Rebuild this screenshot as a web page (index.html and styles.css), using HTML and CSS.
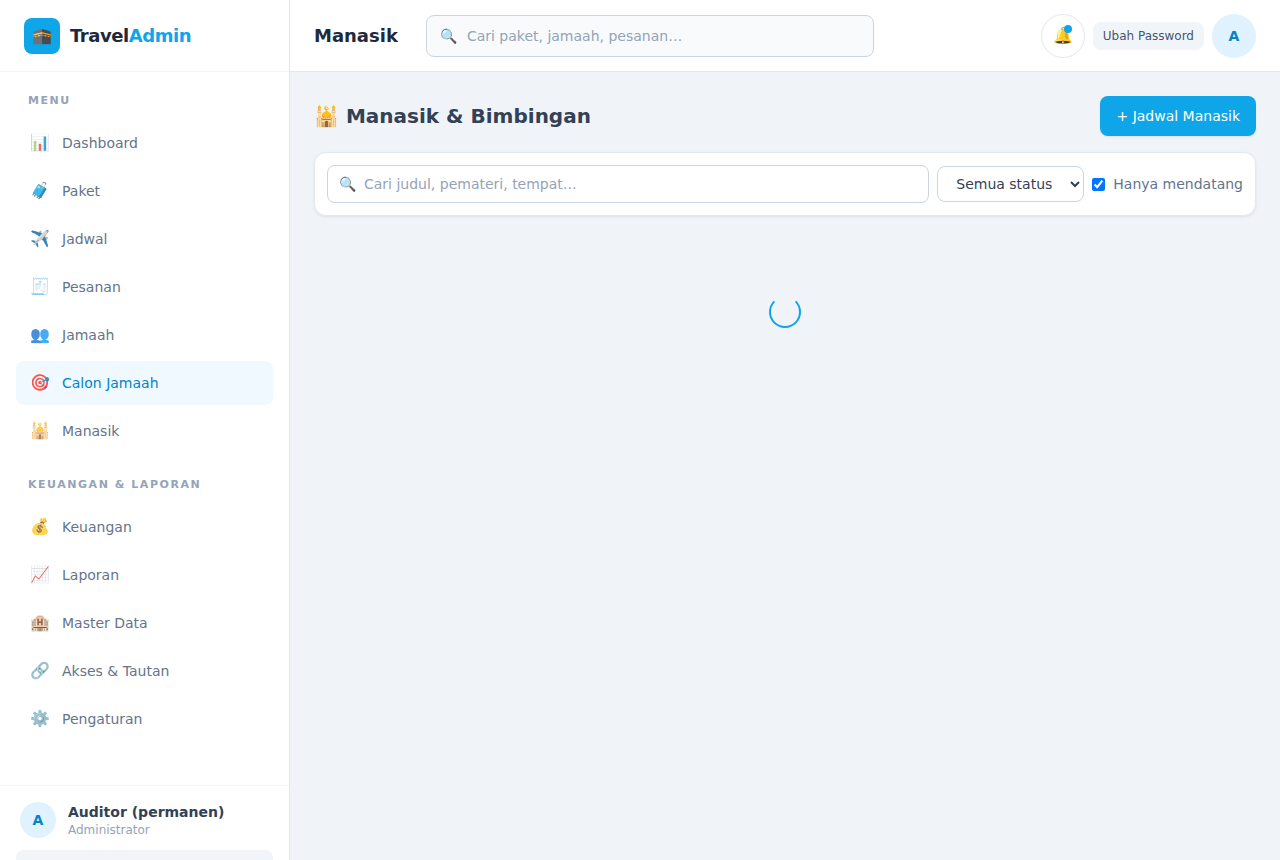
FILE: index.html
```html
<!DOCTYPE html>
<html lang="id">
  <head>
    <meta charset="UTF-8" />
    <meta name="viewport" content="width=device-width, initial-scale=1.0" />
    <title>Manasik - TravelAdmin</title>
    <link rel="stylesheet" href="styles.css">
  </head>
  <body>
    <div class="layout">
      <aside class="sidebar">
        <div class="brand">
          <span class="brand-logo">🕋</span>
          <span class="brand-name">Travel<span>Admin</span></span>
        </div>
        <nav class="nav">
          <div class="nav-section">
            <p class="nav-label">MENU</p>
            <ul class="nav-list">
              <li><a href="#dashboard" class="nav-link"><span class="nav-icon">📊</span>Dashboard</a></li>
              <li><a href="#paket" class="nav-link"><span class="nav-icon">🧳</span>Paket</a></li>
              <li><a href="#jadwal" class="nav-link"><span class="nav-icon">✈️</span>Jadwal</a></li>
              <li><a href="#pesanan" class="nav-link"><span class="nav-icon">🧾</span>Pesanan</a></li>
              <li><a href="#jamaah" class="nav-link"><span class="nav-icon">👥</span>Jamaah</a></li>
              <li><a href="#calon" class="nav-link active"><span class="nav-icon">🎯</span>Calon Jamaah</a></li>
              <li><a href="#manasik" class="nav-link"><span class="nav-icon">🕌</span>Manasik</a></li>
            </ul>
          </div>
          <div class="nav-section">
            <p class="nav-label">KEUANGAN &amp; LAPORAN</p>
            <ul class="nav-list">
              <li><a href="#keuangan" class="nav-link"><span class="nav-icon">💰</span>Keuangan</a></li>
              <li><a href="#laporan" class="nav-link"><span class="nav-icon">📈</span>Laporan</a></li>
              <li><a href="#master" class="nav-link"><span class="nav-icon">🏨</span>Master Data</a></li>
              <li><a href="#akses" class="nav-link"><span class="nav-icon">🔗</span>Akses &amp; Tautan</a></li>
              <li><a href="#pengaturan" class="nav-link"><span class="nav-icon">⚙️</span>Pengaturan</a></li>
            </ul>
          </div>
        </nav>
        <div class="sidebar-footer">
          <div class="user">
            <span class="avatar avatar-sm">A</span>
            <div>
              <p class="user-name">Auditor (permanen)</p>
              <p class="user-role">Administrator</p>
            </div>
          </div>
          <button type="button" class="btn-logout" aria-label="Keluar"></button>
        </div>
      </aside>

      <div class="main">
        <header class="topbar">
          <h1 class="topbar-title">Manasik</h1>
          <label class="search topbar-search">
            <span class="search-icon">🔍</span>
            <input type="search" placeholder="Cari paket, jamaah, pesanan…" />
          </label>
          <div class="topbar-actions">
            <button type="button" class="btn-bell" aria-label="Notifikasi">🔔<span class="bell-dot"></span></button>
            <button type="button" class="btn-password">Ubah Password</button>
            <span class="avatar">A</span>
          </div>
        </header>

        <main class="content">
          <div class="page-head">
            <h2>🕌 Manasik &amp; Bimbingan</h2>
            <button type="button" class="btn-primary">+ Jadwal Manasik</button>
          </div>
          <div class="filters">
            <label class="search filter-search">
              <span class="search-icon">🔍</span>
              <input type="search" placeholder="Cari judul, pemateri, tempat…" />
            </label>
            <select class="filter-select" aria-label="Status">
              <option>Semua status</option>
            </select>
            <label class="filter-check">
              <input type="checkbox" checked />
              Hanya mendatang
            </label>
          </div>
          <div class="loading">
            <div class="spinner"></div>
          </div>
        </main>
      </div>
    </div>
  </body>
</html>
```
FILE: styles.css
```css
* {
  box-sizing: border-box;
}
body {
  margin: 0;
  font-family: "DejaVu Sans", sans-serif;
  font-size: 14px;
  line-height: 20px;
  color: #334155;
  background-color: #f0f4f9;
}
h1,
h2,
p,
ul {
  margin: 0;
  padding: 0;
}
ul {
  list-style: none;
}
button,
input,
select {
  font: inherit;
  color: inherit;
}
button {
  border: none;
  cursor: pointer;
}
.layout {
  display: flex;
  height: 100vh;
  overflow: hidden;
}

/* Sidebar */
.sidebar {
  display: flex;
  flex-direction: column;
  flex: 0 0 290px;
  background: #fff;
  border-right: 1px solid #e2e8f0;
}
.brand {
  display: flex;
  align-items: center;
  flex-shrink: 0;
  gap: 10px;
  height: 72px;
  padding: 0 24px;
  border-bottom: 1px solid #f1f5f9;
}
.brand-logo {
  display: flex;
  align-items: center;
  justify-content: center;
  width: 36px;
  height: 36px;
  border-radius: 8px;
  background: #0ea5e9;
  font-size: 16px;
}
.brand-name {
  font-size: 18px;
  font-weight: bold;
  letter-spacing: -0.025em;
  color: #1e293b;
}
.brand-name span {
  color: #0ea5e9;
}
.nav {
  flex: 1 0 auto;
  padding: 21px 16px 20px;
}
.nav-section {
  margin-bottom: 24px;
}
.nav-label {
  padding: 0 12px 12px;
  font-size: 11px;
  line-height: 16px;
  font-weight: bold;
  letter-spacing: 0.14em;
  color: #94a3b8;
}
.nav-list {
  display: flex;
  flex-direction: column;
  gap: 4px;
}
.nav-link {
  display: flex;
  align-items: center;
  gap: 10px;
  height: 44px;
  padding: 0 12px;
  border-radius: 8px;
  color: #64748b;
  text-decoration: none;
}
.nav-link:hover {
  background: #f8fafc;
}
.nav-link.active {
  background: #f0f9ff;
  color: #0284c7;
}
.nav-icon {
  width: 24px;
  font-size: 16px;
  text-align: center;
  opacity: 0.8;
}
.sidebar-footer {
  flex-shrink: 0;
  padding: 16px;
  border-top: 1px solid #f1f5f9;
}
.user {
  display: flex;
  align-items: center;
  gap: 12px;
  padding: 0 4px;
  margin-bottom: 12px;
}
.user-name {
  font-weight: bold;
  color: #334155;
}
.user-role {
  font-size: 12px;
  line-height: 16px;
  color: #94a3b8;
}
.btn-logout {
  display: block;
  width: 100%;
  height: 36px;
  border-radius: 8px;
  background: #f1f5f9;
}
.avatar {
  display: flex;
  align-items: center;
  justify-content: center;
  width: 44px;
  height: 44px;
  border-radius: 50%;
  background: #e0f2fe;
  color: #0284c7;
  font-weight: bold;
}
.avatar-sm {
  width: 36px;
  height: 36px;
}

/* Topbar */
.main {
  flex: 1;
  min-width: 0;
}
.topbar {
  display: flex;
  align-items: center;
  height: 72px;
  padding: 0 24px;
  background: #fff;
  border-bottom: 1px solid #e2e8f0;
}
.topbar-title {
  margin-right: 28px;
  font-size: 18px;
  font-weight: bold;
  color: #1e293b;
}
.search {
  display: flex;
  align-items: center;
  flex: 1;
  border: 1px solid #cbd5e1;
  border-radius: 8px;
  background: #fff;
}
.search input {
  flex: 1;
  min-width: 0;
  padding: 0;
  border: none;
  outline: none;
  background: none;
}
.search input::placeholder {
  color: #94a3b8;
}
.topbar-search {
  gap: 10px;
  max-width: 448px;
  height: 42px;
  padding: 0 13px;
  background: #f8fafc;
}
.topbar-actions {
  display: flex;
  align-items: center;
  gap: 8px;
  margin-left: auto;
}
.btn-bell {
  position: relative;
  width: 44px;
  height: 44px;
  padding: 0;
  border: 1px solid #e2e8f0;
  border-radius: 50%;
  background: #fff;
  font-size: 16px;
}
.bell-dot {
  position: absolute;
  top: 10px;
  right: 12px;
  width: 8px;
  height: 8px;
  border-radius: 50%;
  background: #0ea5e9;
}
.btn-password {
  padding: 6px 10px;
  border-radius: 8px;
  background: #f1f5f9;
  color: #475569;
  font-size: 12px;
  line-height: 16px;
}

/* Page */
.content {
  padding: 24px;
}
.page-head {
  display: flex;
  align-items: center;
  justify-content: space-between;
  margin-bottom: 16px;
}
.page-head h2 {
  font-size: 20px;
  line-height: 28px;
  font-weight: bold;
  color: #334155;
}
.btn-primary {
  padding: 10px 16px;
  border-radius: 8px;
  background: #0ea5e9;
  color: #fff;
  box-shadow: 0 1px 2px rgba(0, 0, 0, 0.08);
}
.btn-primary:hover {
  background: #0284c7;
}
.filters {
  display: flex;
  align-items: center;
  gap: 8px;
  padding: 12px;
  border: 1px solid #e2e8f0;
  border-radius: 12px;
  background: #fff;
  box-shadow: 0 1px 3px rgba(0, 0, 0, 0.08);
}
.filter-search {
  gap: 8px;
  height: 38px;
  padding: 0 11px;
}
.filter-select {
  height: 36px;
  padding: 0 14px;
  border: 1px solid #cbd5e1;
  border-radius: 8px;
  background: #fff;
}
.filter-check {
  display: flex;
  align-items: center;
  gap: 8px;
  color: #64748b;
}
.filter-check input {
  margin: 0;
}
.loading {
  display: flex;
  justify-content: center;
  padding: 80px 0;
}
.spinner {
  width: 32px;
  height: 32px;
  border: 2px solid #0ea5e9;
  border-top-color: transparent;
  border-radius: 50%;
}
```
